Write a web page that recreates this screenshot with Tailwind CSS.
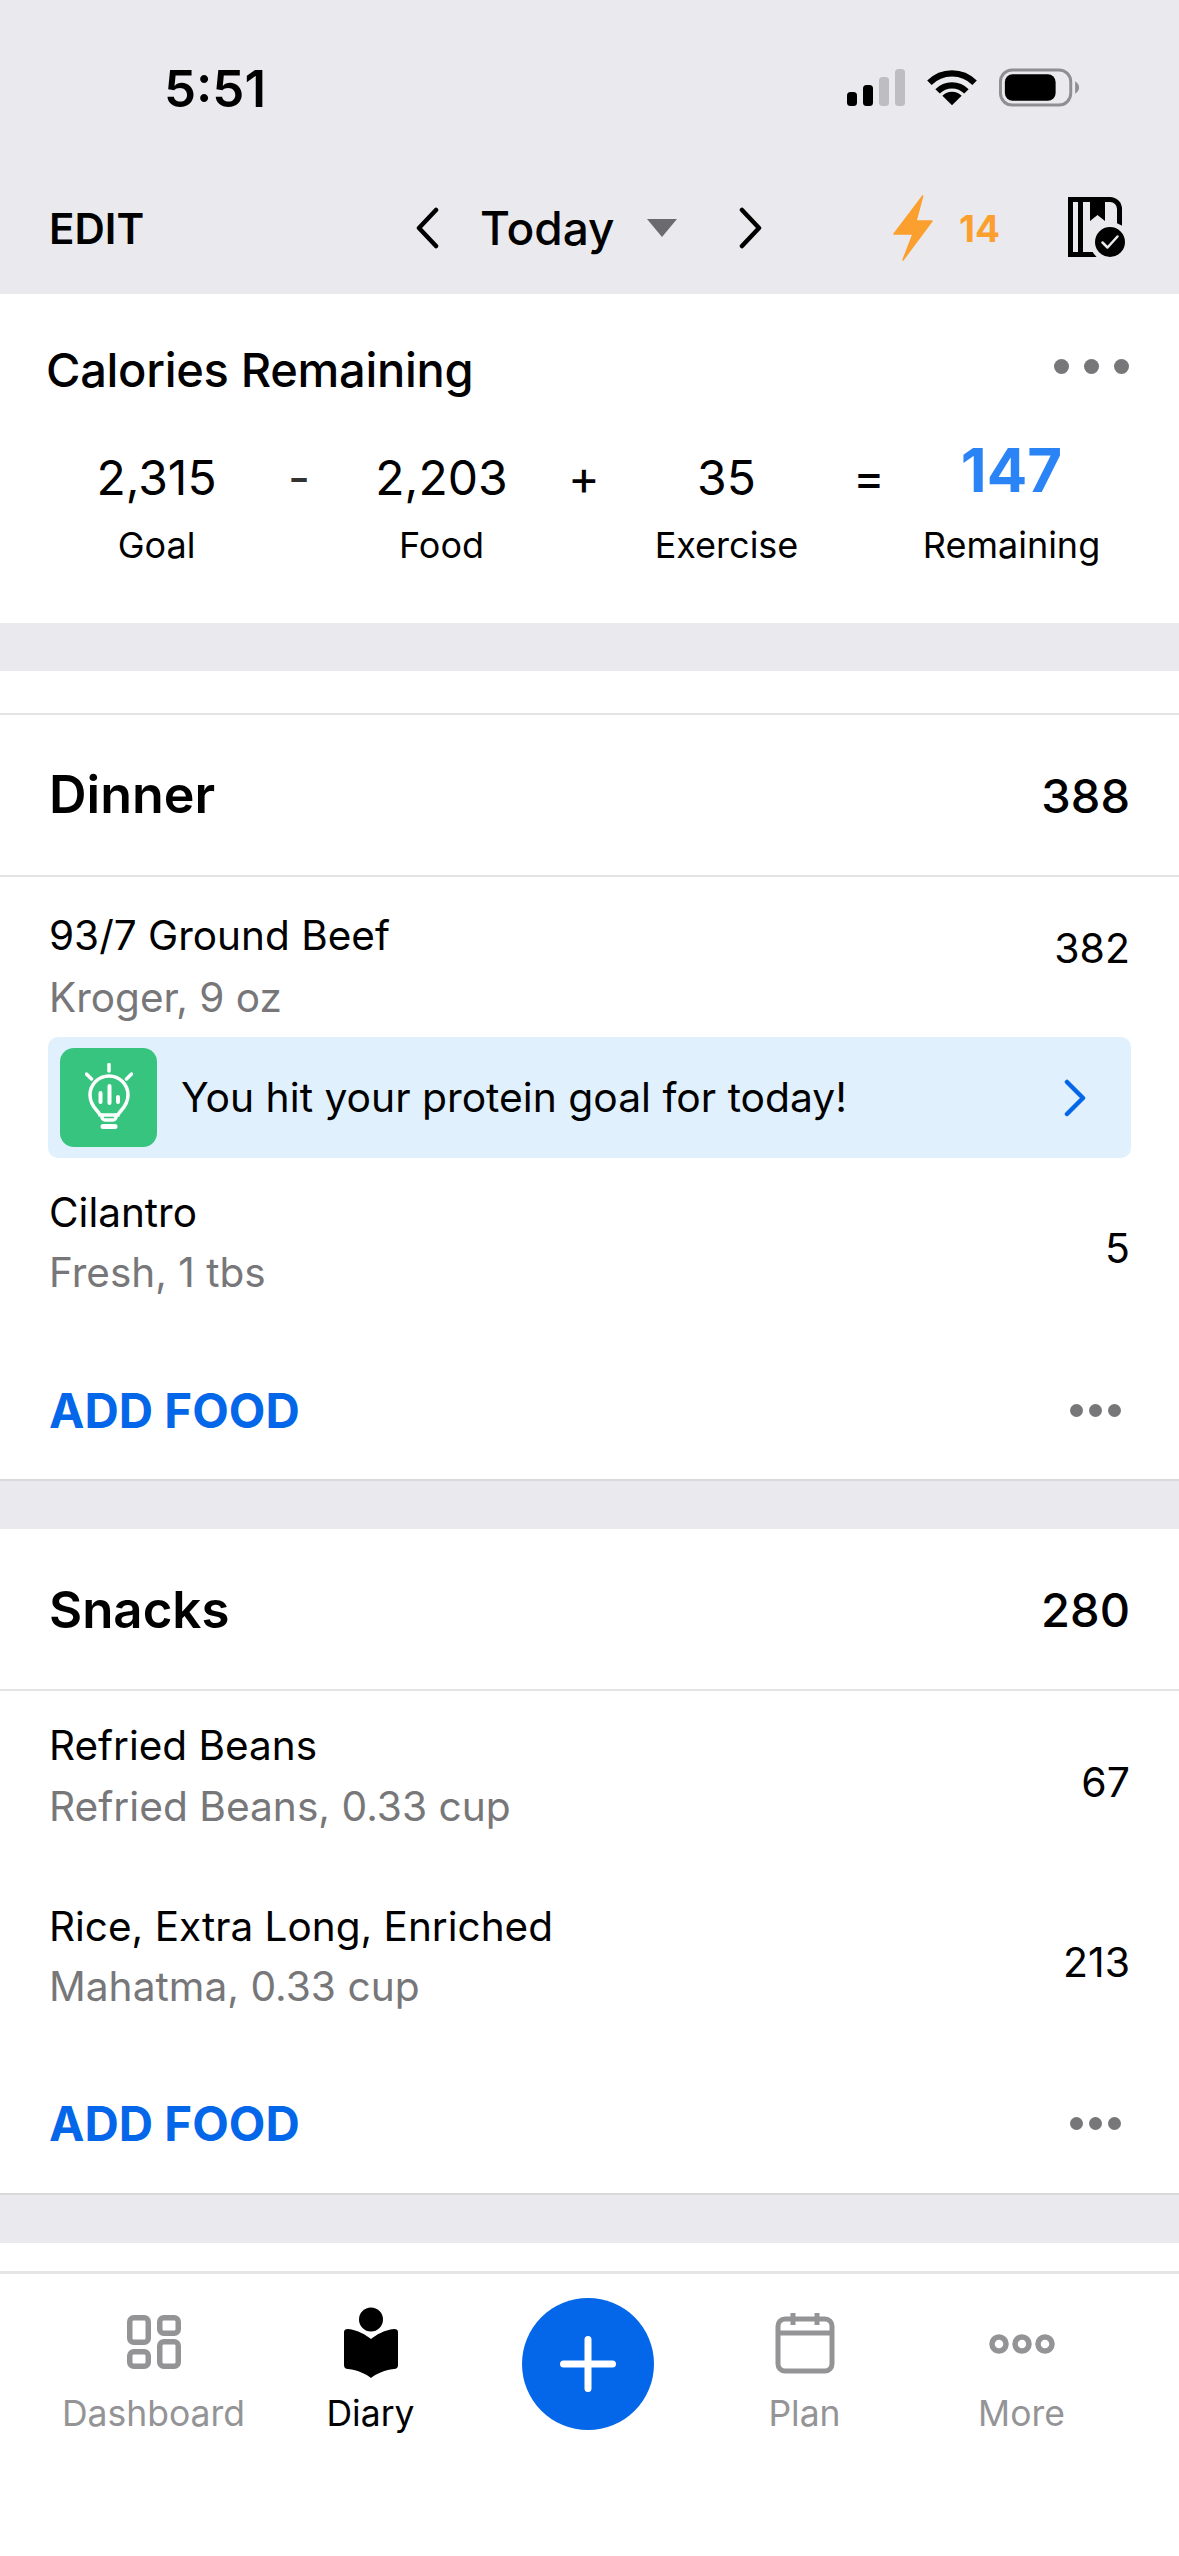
<!DOCTYPE html>
<html lang="en">
<head>
    <meta charset="UTF-8">
    <meta name="viewport" content="width=device-width, initial-scale=1.0">
    <title>Diary</title>
    <script src="https://cdn.jsdelivr.net/npm/@tailwindcss/browser@4"></script>
</head>
<body class="bg-white">
<div class="w-[1179px] h-[2556px] overflow-hidden bg-white text-black flex flex-col font-['Inter',sans-serif]">

    <!-- Status bar + nav -->
    <header class="bg-[#eaeaee] h-[294px] shrink-0">
        <div class="h-[176px] flex items-center pl-[164px] pr-[98px] justify-between">
            <span class="text-[51px] font-semibold leading-none">5:51</span>
            <div class="flex items-center gap-[22px]">
                <svg width="58" height="38" viewBox="0 0 58 38">
                    <rect x="0" y="23" width="10" height="14" rx="3.5" fill="#000"/>
                    <rect x="16" y="16" width="10" height="21" rx="3.5" fill="#000"/>
                    <rect x="32" y="8" width="10" height="29" rx="3.5" fill="#bdbdc2"/>
                    <rect x="48" y="0" width="10" height="37" rx="3.5" fill="#bdbdc2"/>
                </svg>
                <svg width="50" height="38" viewBox="0 0 52 38">
                    <path d="M26 37 16 27a14 14 0 0 1 20 0Z" fill="#000"/>
                    <path d="M11 22.500a21 21 0 0 1 30 0" fill="none" stroke="#000" stroke-width="6.500"/>
                    <path d="M2.500 13.500a33 33 0 0 1 47 0" fill="none" stroke="#000" stroke-width="6.500"/>
                </svg>
                <svg width="82" height="40" viewBox="0 0 84 40">
                    <rect x="1.500" y="1.500" width="72" height="36" rx="12" fill="none" stroke="#8e8e93" stroke-width="3"/>
                    <rect x="6" y="6" width="52" height="27" rx="8" fill="#000"/>
                    <path d="M78 13c3 2 4 4 4 6.500s-1 4.500-4 6.500Z" fill="#8e8e93"/>
                </svg>
            </div>
        </div>
        <div class="h-[104px] flex items-center pl-[49px]">
            <span class="text-[42px] font-semibold leading-none w-[366px] mt-[2px]">EDIT</span>
            <svg class="w-[26px] h-[42px]" viewBox="0 0 26 42" fill="none" stroke="#000" stroke-width="4.500" stroke-linecap="round" stroke-linejoin="round">
                <path d="M21 3 4 21l17 18"/>
            </svg>
            <span class="text-[46px] font-medium leading-none ml-[39px] w-[130px] whitespace-nowrap">Today</span>
            <svg class="ml-[37px] w-[30px] h-[18px]" viewBox="0 0 30 18"><path d="M0 0h30L15 18Z" fill="#6b6b6f"/></svg>
            <svg class="ml-[60px] w-[26px] h-[42px]" viewBox="0 0 26 42" fill="none" stroke="#000" stroke-width="4.500" stroke-linecap="round" stroke-linejoin="round">
                <path d="M5 3l17 18L5 39"/>
            </svg>
            <svg class="ml-[130px] w-[40px] h-[66px]" viewBox="0 0 40 66"><path d="M29.700 1 1 39h19L10 65 39 26H23Z" fill="#fb9f2f" stroke="#fb9f2f" stroke-linejoin="round" stroke-width="1.500"/></svg>
            <span class="ml-[26px] text-[37px] font-bold leading-none text-[#fb9f2f] w-[40px] whitespace-nowrap">14</span>
            <svg class="ml-[69px] w-[58px] h-[60px] -mt-[2px]" viewBox="0 0 58 60">
                <path d="M0 0h42a12 12 0 0 1 12 12v48H0Z" fill="#000"/>
                <rect x="5" y="5" width="5" height="50" fill="#eaeaee"/>
                <path d="M15 5h27a7 7 0 0 1 7 7v43H15Z" fill="#eaeaee"/>
                <path d="M22 0h15v24l-7.500-6-7.500 6Z" fill="#000"/>
                <circle cx="42" cy="45" r="20" fill="#eaeaee"/>
                <circle cx="42" cy="45" r="15" fill="#000"/>
                <path d="M34.500 45.500l5 5 10-11" fill="none" stroke="#eaeaee" stroke-width="2.500" stroke-linecap="round" stroke-linejoin="round"/>
            </svg>
        </div>
    </header>

    <!-- Calories Remaining -->
    <section class="h-[329px] shrink-0 bg-white">
        <div class="flex items-center justify-between pl-[46px] pr-[52px] pt-[47px]">
            <h2 class="text-[47px] font-medium leading-[58px] tracking-[-0.3px]">Calories Remaining</h2>
            <div class="flex gap-[15px] -mt-[8px] -mr-[2px]">
                <span class="w-[15px] h-[15px] rounded-full bg-[#77777a]"></span>
                <span class="w-[15px] h-[15px] rounded-full bg-[#77777a]"></span>
                <span class="w-[15px] h-[15px] rounded-full bg-[#77777a]"></span>
            </div>
        </div>
        <div class="grid grid-cols-[223px_62px_223px_62px_223px_62px_223px] pl-[45px] pt-[50px] items-center text-center text-[48px] leading-[58px]">
            <span>2,315</span>
            <span class="text-[#333]">-</span>
            <span>2,203</span>
            <span>+</span>
            <span>35</span>
            <span>=</span>
            <span class="text-[60px] font-bold text-[#2b84f5] -mt-[16px] leading-[58px]">147</span>
            <span class="text-[36px] leading-[44px] mt-[16px]">Goal</span>
            <span></span>
            <span class="text-[36px] leading-[44px] mt-[16px]">Food</span>
            <span></span>
            <span class="text-[36px] leading-[44px] mt-[16px]">Exercise</span>
            <span></span>
            <span class="text-[36px] leading-[44px] mt-[16px]">Remaining</span>
        </div>
    </section>

    <div class="h-[48px] bg-[#eaeaee] shrink-0"></div>
    <div class="h-[44px] bg-white shrink-0 border-b-2 border-[#e4e4e6]"></div>

    <!-- Dinner -->
    <section class="h-[766px] shrink-0 bg-white border-b-2 border-[#d9d9db] flex flex-col">
        <div class="h-[162px] shrink-0 border-b-2 border-[#e4e4e6] flex items-center justify-between px-[49px]">
            <h3 class="text-[52px] font-semibold leading-none">Dinner</h3>
            <span class="text-[47px] font-medium leading-none">388</span>
        </div>
        <div class="h-[160px] shrink-0 flex justify-between px-[49px] pt-[30px]">
            <div>
                <p class="text-[40.5px] leading-[58px]">93/7 Ground Beef</p>
                <p class="text-[40.5px] leading-[58px] mt-[4px] text-[#77777a]">Kroger, 9 oz</p>
            </div>
            <span class="text-[41px] leading-[58px] mt-[12px]">382</span>
        </div>
        <div class="mx-[48px] h-[121px] shrink-0 rounded-[10px] bg-[#e0f1fd] flex items-center pl-[12px] pr-[44px]">
            <div class="w-[97px] h-[99px] rounded-[14px] bg-[#37c47f] flex items-center justify-center">
                <svg class="w-[48px] h-[66px] -mt-[4px]" viewBox="0 0 48 66" fill="none" stroke="#fff" stroke-width="3.500" stroke-linecap="round">
                    <path d="M24 1.500v6.500M1.500 11l5 5M46.500 11l-5 5"/>
                    <path d="M15 52c-1-4-10-8-10-20a19 19 0 0 1 38 0c0 12-9 16-10 20Z"/>
                    <path d="M17 52v2a3 3 0 0 0 3 3h8a3 3 0 0 0 3-3v-2"/>
                    <path d="M18 63.500h12" stroke-width="5"/>
                    <path d="M15.500 30v9M24.500 23v17M33 34v5" stroke-width="4"/>
                </svg>
            </div>
            <span class="ml-[24px] text-[40.8px] leading-none flex-1">You hit your protein goal for today!</span>
            <svg class="w-[24px] h-[38px]" viewBox="0 0 24 38" fill="none" stroke="#0466e8" stroke-width="4.500" stroke-linecap="round" stroke-linejoin="round">
                <path d="M4 3l16 16L4 35"/>
            </svg>
        </div>
        <div class="h-[139px] shrink-0 flex justify-between px-[49px] pt-[26px]">
            <div>
                <p class="text-[40.5px] leading-[58px]">Cilantro</p>
                <p class="text-[40.5px] leading-[58px] mt-[2px] text-[#77777a]">Fresh, 1 tbs</p>
            </div>
            <span class="text-[41px] leading-[58px] mt-[35px]">5</span>
        </div>
        <div class="flex-1 flex items-center justify-between pl-[49px] pr-[58px] pt-[45px]">
            <span class="text-[47.5px] font-bold leading-none text-[#0466e8]">ADD FOOD</span>
            <div class="flex gap-[6px]">
                <span class="w-[13px] h-[13px] rounded-full bg-[#77777a]"></span>
                <span class="w-[13px] h-[13px] rounded-full bg-[#77777a]"></span>
                <span class="w-[13px] h-[13px] rounded-full bg-[#77777a]"></span>
            </div>
        </div>
    </section>

    <div class="h-[48px] bg-[#eaeaee] shrink-0"></div>

    <!-- Snacks -->
    <section class="h-[666px] shrink-0 bg-white border-b-2 border-[#d9d9db] flex flex-col">
        <div class="h-[162px] shrink-0 border-b-2 border-[#e4e4e6] flex items-center justify-between px-[49px]">
            <h3 class="text-[51px] font-semibold leading-none">Snacks</h3>
            <span class="text-[47px] font-medium leading-none">280</span>
        </div>
        <div class="h-[180px] shrink-0 flex justify-between px-[49px] pt-[26px]">
            <div>
                <p class="text-[40.5px] leading-[58px]">Refried Beans</p>
                <p class="text-[40.7px] leading-[58px] mt-[3px] text-[#77777a]">Refried Beans, 0.33 cup</p>
            </div>
            <span class="text-[41px] leading-[58px] mt-[36px]">67</span>
        </div>
        <div class="h-[150px] shrink-0 flex justify-between px-[49px] pt-[27px]">
            <div>
                <p class="text-[40.5px] leading-[58px]">Rice, Extra Long, Enriched</p>
                <p class="text-[40.7px] leading-[58px] mt-[2px] text-[#77777a]">Mahatma, 0.33 cup</p>
            </div>
            <span class="text-[41px] leading-[58px] mt-[35px]">213</span>
        </div>
        <div class="flex-1 flex items-center justify-between pl-[49px] pr-[58px] pt-[33px]">
            <span class="text-[47.5px] font-bold leading-none text-[#0466e8]">ADD FOOD</span>
            <div class="flex gap-[6px]">
                <span class="w-[13px] h-[13px] rounded-full bg-[#77777a]"></span>
                <span class="w-[13px] h-[13px] rounded-full bg-[#77777a]"></span>
                <span class="w-[13px] h-[13px] rounded-full bg-[#77777a]"></span>
            </div>
        </div>
    </section>

    <div class="h-[48px] bg-[#eaeaee] shrink-0"></div>
    <div class="h-[28px] bg-white shrink-0"></div>

    <!-- Tab bar -->
    <nav class="flex-1 border-t-[3px] border-[#e5e5e7] bg-white grid grid-cols-[217px_217px_217px_217px_217px] pl-[45px] pt-[33px] items-start text-[35.500px] leading-[44px] text-center text-[#949497]">
        <div class="flex flex-col items-center">
            <svg class="w-[54px] h-[54px] mt-[8px]" viewBox="0 0 54 54" fill="none" stroke="#949497" stroke-width="5.500">
                <rect x="2.750" y="2.750" width="18.500" height="24.500" rx="4"/>
                <rect x="32.750" y="2.750" width="18.500" height="15.500" rx="4"/>
                <rect x="2.750" y="36.750" width="18.500" height="14.500" rx="4"/>
                <rect x="32.750" y="26.750" width="18.500" height="24.500" rx="4"/>
            </svg>
            <span class="mt-[23px]">Dashboard</span>
        </div>
        <div class="flex flex-col items-center text-black">
            <svg class="w-[54px] h-[72px]" viewBox="0 0 54 72" fill="#000">
                <circle cx="27" cy="12.500" r="12"/>
                <path d="M0 25Q0 22 4 22C14 23 22 28 27 32C32 28 40 23 50 22Q54 22 54 25V58Q54 62 50 62C40 63 32 67 27 71C22 67 14 63 4 62Q0 62 0 58Z"/>
            </svg>
            <span class="mt-[13px]">Diary</span>
        </div>
        <div class="flex justify-center -mt-[9px]">
            <div class="w-[132px] h-[132px] rounded-full bg-[#0466e8] flex items-center justify-center">
                <svg class="w-[56px] h-[56px]" viewBox="0 0 56 56" fill="none" stroke="#fff" stroke-width="7" stroke-linecap="round"><path d="M28 3.500v49M3.500 28h49"/></svg>
            </div>
        </div>
        <div class="flex flex-col items-center">
            <svg class="w-[60px] h-[62px] mt-[5px]" viewBox="0 0 60 62" fill="none" stroke="#949497" stroke-width="5">
                <rect x="3" y="7" width="54" height="52" rx="7"/>
                <path d="M3 21h54M18 1v12M42 1v12"/>
            </svg>
            <span class="mt-[18px]">Plan</span>
        </div>
        <div class="flex flex-col items-center">
            <svg class="w-[66px] h-[20px] mt-[27px]" viewBox="0 0 66 20" fill="none" stroke="#949497" stroke-width="5.500">
                <circle cx="10" cy="10" r="7"/><circle cx="33" cy="10" r="7"/><circle cx="56" cy="10" r="7"/>
            </svg>
            <span class="mt-[38px]">More</span>
        </div>
    </nav>
</div>
</body>
</html>
